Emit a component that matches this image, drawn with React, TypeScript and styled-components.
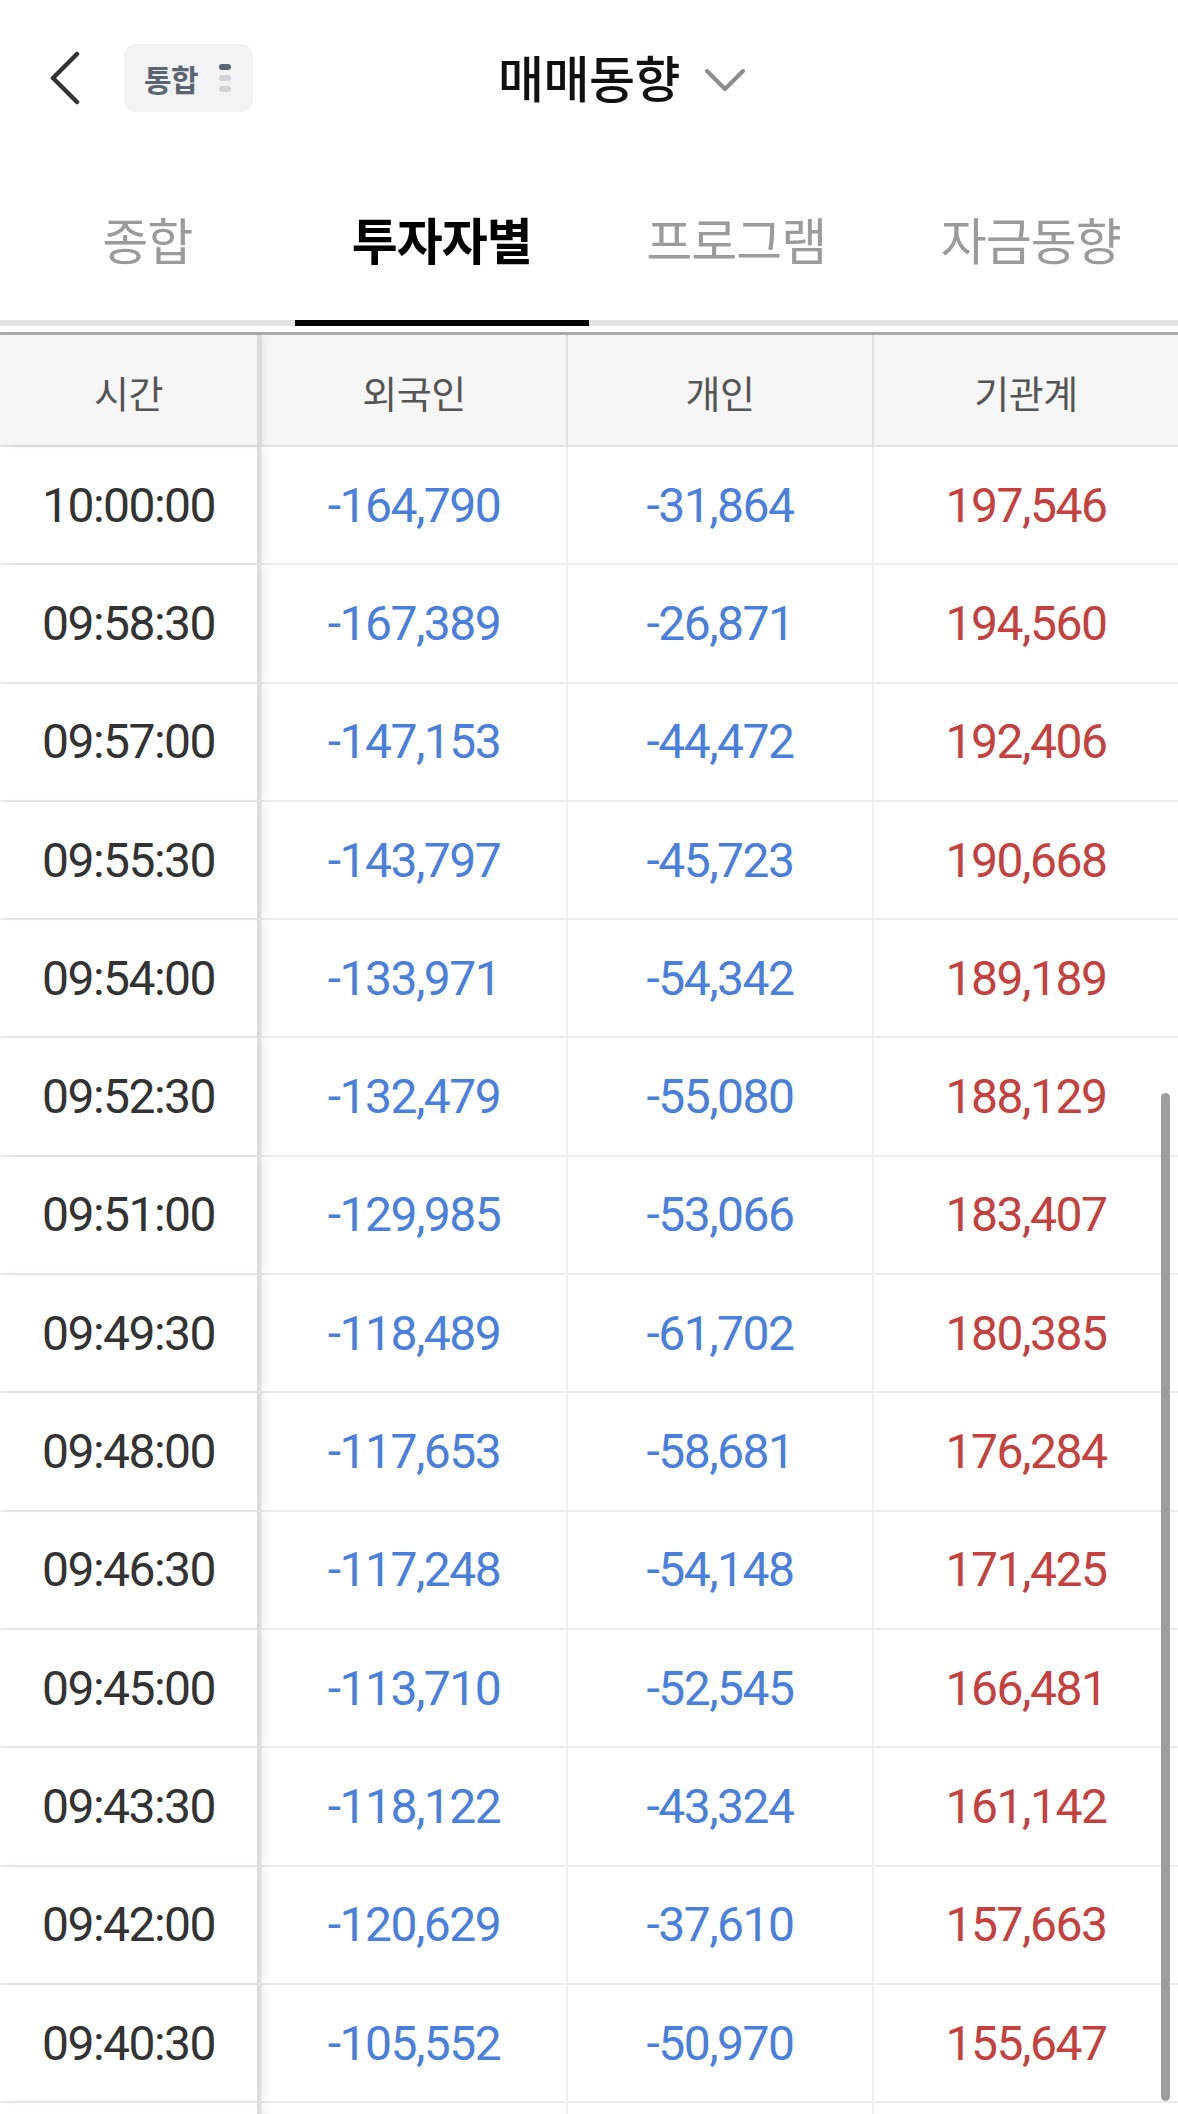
import React from "react";
import styled, { createGlobalStyle, css } from "styled-components";

const GlobalStyle = createGlobalStyle`
  html, body {
    margin: 0;
    padding: 0;
    background: #ffffff;
  }
  body {
    font-family: "Noto Sans CJK KR", "Noto Sans", sans-serif;
  }
`;

type Row = [string, string, string, string];

const rows: Row[] = [
  ["10:00:00", "-164,790", "-31,864", "197,546"],
  ["09:58:30", "-167,389", "-26,871", "194,560"],
  ["09:57:00", "-147,153", "-44,472", "192,406"],
  ["09:55:30", "-143,797", "-45,723", "190,668"],
  ["09:54:00", "-133,971", "-54,342", "189,189"],
  ["09:52:30", "-132,479", "-55,080", "188,129"],
  ["09:51:00", "-129,985", "-53,066", "183,407"],
  ["09:49:30", "-118,489", "-61,702", "180,385"],
  ["09:48:00", "-117,653", "-58,681", "176,284"],
  ["09:46:30", "-117,248", "-54,148", "171,425"],
  ["09:45:00", "-113,710", "-52,545", "166,481"],
  ["09:43:30", "-118,122", "-43,324", "161,142"],
  ["09:42:00", "-120,629", "-37,610", "157,663"],
  ["09:40:30", "-105,552", "-50,970", "155,647"],
];

const tabs = ["종합", "투자자별", "프로그램", "자금동향"];
const columns = ["시간", "외국인", "개인", "기관계"];

const Page = styled.div`
  position: relative;
  width: 1178px;
  height: 2114px;
  overflow: hidden;
  background: #ffffff;
`;

const TopBar = styled.header`
  display: grid;
  grid-template-columns: 1fr auto 1fr;
  align-items: center;
  height: 156px;
`;

const LeftGroup = styled.div`
  display: flex;
  align-items: center;
  gap: 43px;
  padding-left: 49px;
`;

const BackButton = styled.button`
  all: unset;
  display: flex;
  width: 32px;
  height: 54px;
`;

const MarketBadge = styled.div`
  display: flex;
  align-items: center;
  justify-content: space-between;
  box-sizing: border-box;
  width: 129px;
  height: 68px;
  padding: 0 22px 0 20px;
  border-radius: 12px;
  background: #f2f3f5;
  color: #5b6470;
  font-size: 30px;
  font-weight: 700;
  letter-spacing: -0.5px;
`;

const DotStack = styled.span`
  display: flex;
  flex-direction: column;
  gap: 5px;
`;

const Dot = styled.i<{ $on?: boolean }>`
  display: block;
  width: 12px;
  height: 6px;
  border-radius: 3px;
  background: ${({ $on }) => ($on ? "#5d6670" : "#d0d3d7")};
`;

const TitleWrap = styled.div`
  position: relative;
  display: flex;
  align-items: center;
`;

const Title = styled.h1`
  margin: -4px 0 0;
  font-size: 50px;
  font-weight: 500;
  color: #111111;
  line-height: 1;
  letter-spacing: -0.5px;
`;

const TitleCaret = styled.svg`
  position: absolute;
  left: calc(100% + 24px);
  top: 50%;
  margin-top: -10px;
`;

const TabBar = styled.nav`
  display: flex;
  height: 170px;
  box-sizing: border-box;
  border-bottom: 6px solid #e3e3e3;
`;

const Tab = styled.div<{ $active?: boolean }>`
  position: relative;
  flex: 1;
  display: flex;
  align-items: center;
  justify-content: center;
  font-size: 50px;
  letter-spacing: -1px;
  ${({ $active }) =>
    $active
      ? css`
          color: #000000;
          font-weight: 700;
          &::after {
            content: "";
            position: absolute;
            left: 0;
            right: 0;
            bottom: -6px;
            height: 6px;
            background: #000000;
          }
        `
      : css`
          color: #9b9b9b;
          font-weight: 400;
        `}
`;

const Table = styled.div`
  margin-top: 6px;
  border-top: 3px solid #ababab;
`;

const GridRow = styled.div<{ $head?: boolean }>`
  display: grid;
  grid-template-columns: 260px 1fr 1fr 1fr;
  box-sizing: border-box;
  height: ${({ $head }) => ($head ? "112px" : "118.3px")};
  border-bottom: 2px solid ${({ $head }) => ($head ? "#e2e2e2" : "#ececec")};
  background: ${({ $head }) => ($head ? "#f6f6f6" : "#ffffff")};
`;

const Cell = styled.div<{ $tone?: "time" | "down" | "up" | "head"; $first?: boolean }>`
  position: relative;
  display: flex;
  align-items: center;
  justify-content: center;
  font-family: Roboto, "Noto Sans", sans-serif;
  font-size: 48px;
  letter-spacing: -1.5px;
  border-left: 2px solid #efefef;
  ${({ $first }) =>
    $first &&
    css`
      border-left: none;
      z-index: 1;
      border-right: 3px solid #dcdcdc;
      box-shadow: 6px 0 8px rgba(0, 0, 0, 0.05);
    `}
  ${({ $tone }) => {
    switch ($tone) {
      case "head":
        return css`
          font-family: "Noto Sans CJK KR", sans-serif;
          font-size: 38px;
          letter-spacing: -0.5px;
          color: #555555;
          border-left-color: #e2e2e2;
          padding-top: 2px;
        `;
      case "down":
        return css`
          color: #4a7fdc;
        `;
      case "up":
        return css`
          color: #c4413f;
        `;
      default:
        return css`
          color: #333333;
        `;
    }
  }}
`;

const Scrollbar = styled.div`
  position: absolute;
  right: 8px;
  top: 1093px;
  width: 9px;
  height: 1008px;
  border-radius: 5px;
  background: #9e9e9e;
`;

const toneOf = (value: string) => (value.startsWith("-") ? "down" : "up");

const App: React.FC = () => {
  return (
    <Page>
      <GlobalStyle />
      <TopBar>
        <LeftGroup>
          <BackButton type="button" aria-label="뒤로">
            <svg width="32" height="54" viewBox="0 0 32 54" fill="none">
              <path d="M28 3 L4 27 L28 51" stroke="#333333" strokeWidth="4.5" strokeLinecap="round" strokeLinejoin="round" />
            </svg>
          </BackButton>
          <MarketBadge>
            통합
            <DotStack>
              <Dot $on />
              <Dot />
              <Dot />
            </DotStack>
          </MarketBadge>
        </LeftGroup>
        <TitleWrap>
          <Title>매매동향</Title>
          <TitleCaret width="42" height="24" viewBox="0 0 42 24" fill="none">
            <path d="M3 3 L21 21 L39 3" stroke="#8c8c8c" strokeWidth="4" strokeLinecap="round" strokeLinejoin="round" />
          </TitleCaret>
        </TitleWrap>
        <div />
      </TopBar>

      <TabBar>
        {tabs.map((tab, i) => (
          <Tab key={tab} $active={i === 1}>
            {tab}
          </Tab>
        ))}
      </TabBar>

      <Table>
        <GridRow $head>
          {columns.map((col, i) => (
            <Cell key={col} $tone="head" $first={i === 0}>
              {col}
            </Cell>
          ))}
        </GridRow>
        {rows.map(([time, foreign, retail, inst]) => (
          <GridRow key={time}>
            <Cell $tone="time" $first>
              {time}
            </Cell>
            <Cell $tone={toneOf(foreign)}>{foreign}</Cell>
            <Cell $tone={toneOf(retail)}>{retail}</Cell>
            <Cell $tone={toneOf(inst)}>{inst}</Cell>
          </GridRow>
        ))}
        {/* next row only peeks in at the bottom edge */}
        <GridRow>
          <Cell $first />
          <Cell />
          <Cell />
          <Cell />
        </GridRow>
      </Table>

      <Scrollbar />
    </Page>
  );
};

export default App;
